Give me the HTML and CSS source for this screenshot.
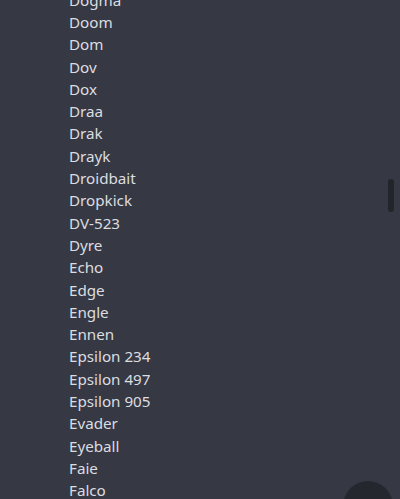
FILE: index.html
```html
<!DOCTYPE html>
<html>
<head>
<meta charset="utf-8">
<link rel="stylesheet" href="styles.css">
</head>
<body>
<div class="screen">
  <ul class="list">
    <li>Dogma</li>
    <li>Doom</li>
    <li>Dom</li>
    <li>Dov</li>
    <li>Dox</li>
    <li>Draa</li>
    <li>Drak</li>
    <li>Drayk</li>
    <li>Droidbait</li>
    <li>Dropkick</li>
    <li>DV-523</li>
    <li>Dyre</li>
    <li>Echo</li>
    <li>Edge</li>
    <li>Engle</li>
    <li>Ennen</li>
    <li>Epsilon 234</li>
    <li>Epsilon 497</li>
    <li>Epsilon 905</li>
    <li>Evader</li>
    <li>Eyeball</li>
    <li>Faie</li>
    <li>Falco</li>
  </ul>
  <div class="scrollbar"></div>
  <div class="fab"></div>
</div>
</body>
</html>
```

FILE: styles.css
```css
html, body {
  margin: 0;
  padding: 0;
  background: #363944;
}
.screen {
  position: relative;
  width: 400px;
  height: 499px;
  overflow: hidden;
  background: #363944;
}
.list {
  list-style: none;
  margin: -11.3px 0 0 0;
  padding: 0 0 0 69px;
  font-family: "Noto Sans", "Open Sans", sans-serif;
  font-size: 15.2px;
  line-height: 22.29px;
  color: #dcdde0;
}
.scrollbar {
  position: absolute;
  left: 388px;
  top: 179px;
  width: 6px;
  height: 33px;
  border-radius: 3px;
  background: #23252b;
}
.fab {
  position: absolute;
  left: 343px;
  top: 481px;
  width: 50px;
  height: 50px;
  border-radius: 50%;
  background: #25272e;
}
```
